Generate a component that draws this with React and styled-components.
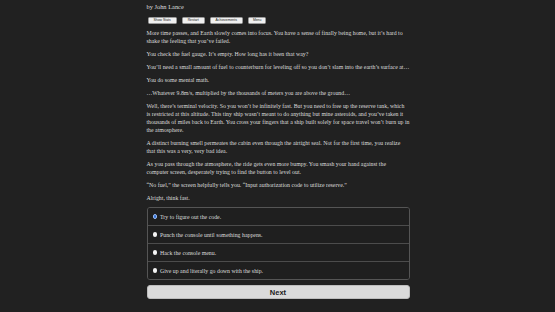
import React, { useState } from 'react';
import styled, { createGlobalStyle } from 'styled-components';

const Global = createGlobalStyle`
  html, body {
    margin: 0;
    padding: 0;
    background: #212121;
  }
`;

const Page = styled.div`
  width: 555px;
  height: 312px;
  background: #212121;
  color: #dcdcdc;
  font-family: "Liberation Serif", "Times New Roman", serif;
  overflow: hidden;
`;

const Column = styled.div`
  width: 263px;
  margin: 0 auto;
  padding-top: 3px;
  padding-left: 1px;
`;

const Byline = styled.div`
  font-size: 6.4px;
  line-height: 8px;
`;

const Toolbar = styled.div`
  display: flex;
  gap: 5px;
  margin: 6px 0 5px 1px;
`;

const ToolButton = styled.button`
  font-family: "Liberation Sans", Arial, sans-serif;
  font-size: 3.4px;
  line-height: 5px;
  height: 7px;
  padding: 0 ${(p) => p.$pad || 5}px;
  background: #f0f0f0;
  color: #222;
  border: 1px solid #9a9a9a;
  border-radius: 1.5px;
`;

const Para = styled.p`
  font-size: 5.85px;
  line-height: 8px;
  margin: 0 0 5px;
`;

const Choices = styled.div`
  border: 1px solid #555;
  border-radius: 3px;
  overflow: hidden;
`;

const Choice = styled.label`
  display: flex;
  align-items: center;
  gap: 3px;
  height: 17px;
  padding-left: 5px;
  font-size: 5.85px;
  border-top: ${(p) => (p.$first ? 'none' : '1px solid #4c4c4c')};
  background: #1f1f1f;
`;

const Radio = styled.span`
  width: 4.5px;
  height: 4.5px;
  border-radius: 50%;
  box-sizing: border-box;
  background: ${(p) => (p.$on ? '#2f6fd6' : '#f4f4f4')};
  border: ${(p) => (p.$on ? '0.8px solid #9dbcf0' : 'none')};
`;

const NextButton = styled.button`
  display: block;
  width: 100%;
  height: 14px;
  margin-top: 5px;
  background: #dadada;
  color: #1c1c1c;
  border: 1px solid #bdbdbd;
  border-radius: 3px;
  font-family: "Liberation Sans", Arial, sans-serif;
  font-weight: 700;
  font-size: 7.5px;
`;

const paragraphs = [
  'More time passes, and Earth slowly comes into focus. You have a sense of finally being home, but it\u2019s hard to shake the feeling that you\u2019ve failed.',
  'You check the fuel gauge. It\u2019s empty. How long has it been that way?',
  'You\u2019ll need a small amount of fuel to counterburn for leveling off so you don\u2019t slam into the earth\u2019s surface at\u2026',
  'You do some mental math.',
  '\u2026Whatever 9.8m/s, multiplied by the thousands of meters you are above the ground\u2026',
  'Well, there\u2019s terminal velocity. So you won\u2019t be infinitely fast. But you need to free up the reserve tank, which is restricted at this altitude. This tiny ship wasn\u2019t meant to do anything but mine asteroids, and you\u2019ve taken it thousands of miles back to Earth. You cross your fingers that a ship built solely for space travel won\u2019t burn up in the atmosphere.',
  'A distinct burning smell permeates the cabin even through the airtight seal. Not for the first time, you realize that this was a very, very bad idea.',
  'As you pass through the atmosphere, the ride gets even more bumpy. You smash your hand against the computer screen, desperately trying to find the button to level out.',
  '\u201cNo fuel,\u201d the screen helpfully tells you. \u201cInput authorization code to utilize reserve.\u201d',
  'Alright, think fast.',
];

const options = [
  'Try to figure out the code.',
  'Punch the console until something happens.',
  'Hack the console menu.',
  'Give up and literally go down with the ship.',
];

export default function App() {
  const [picked, setPicked] = useState(0);
  return (
    <Page>
      <Global />
      <Column>
        <Byline>by John Lance</Byline>
        <Toolbar>
          <ToolButton>Show Stats</ToolButton>
          <ToolButton>Restart</ToolButton>
          <ToolButton>Achievements</ToolButton>
          <ToolButton $pad={4}>Menu</ToolButton>
        </Toolbar>
        {paragraphs.map((t, i) => (
          <Para key={i}>{t}</Para>
        ))}
        <Choices>
          {options.map((o, i) => (
            <Choice key={i} $first={i === 0} onClick={() => setPicked(i)}>
              <Radio $on={picked === i} />
              {o}
            </Choice>
          ))}
        </Choices>
        <NextButton>Next</NextButton>
      </Column>
    </Page>
  );
}
